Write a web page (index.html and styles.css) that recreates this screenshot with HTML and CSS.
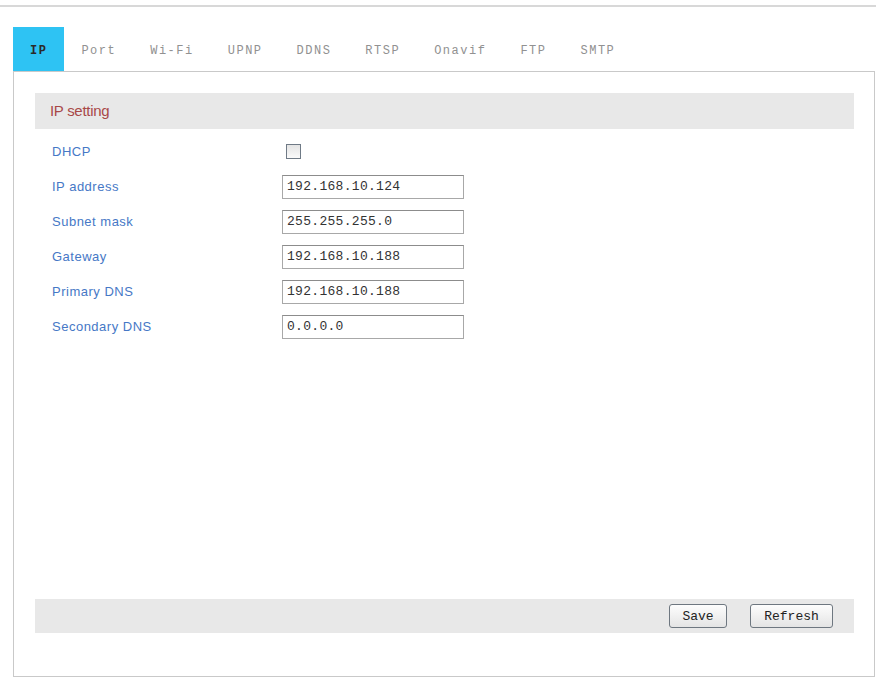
FILE: index.html
```html
<!DOCTYPE html>
<html lang="en">
<head>
    <meta charset="UTF-8">
    <title>IP setting</title>
    <link rel="stylesheet" href="styles.css">
</head>
<body>
    <div class="topline"></div>
    <ul class="tabs">
        <li class="tab active">IP</li>
        <li class="tab">Port</li>
        <li class="tab">Wi-Fi</li>
        <li class="tab">UPNP</li>
        <li class="tab">DDNS</li>
        <li class="tab">RTSP</li>
        <li class="tab">Onavif</li>
        <li class="tab">FTP</li>
        <li class="tab">SMTP</li>
    </ul>
    <div class="panel">
        <div class="section-title">IP setting</div>
        <div class="form">
            <div class="row">
                <label class="label">DHCP</label>
                <input type="checkbox" class="check">
            </div>
            <div class="row">
                <label class="label">IP address</label>
                <input type="text" class="field" value="192.168.10.124">
            </div>
            <div class="row">
                <label class="label">Subnet mask</label>
                <input type="text" class="field" value="255.255.255.0">
            </div>
            <div class="row">
                <label class="label">Gateway</label>
                <input type="text" class="field" value="192.168.10.188">
            </div>
            <div class="row">
                <label class="label">Primary DNS</label>
                <input type="text" class="field" value="192.168.10.188">
            </div>
            <div class="row">
                <label class="label">Secondary DNS</label>
                <input type="text" class="field" value="0.0.0.0">
            </div>
        </div>
        <div class="actions">
            <button class="btn">Save</button>
            <button class="btn">Refresh</button>
        </div>
    </div>
</body>
</html>
```
FILE: styles.css
```css
/* IP setting page */
body {
    margin: 0;
    padding: 0;
    font-family: "Liberation Sans", Arial, sans-serif;
    background: #fff;
}
.topline {
    margin-top: 5px;
    margin-right: 3px;
    border-top: 2px solid #d8d8d8;
}
.tabs {
    list-style: none;
    margin: 20px 0 0 13px;
    padding: 0;
    display: flex;
    height: 44px;
}
.tab {
    padding: 2px 17px 0;
    line-height: 44px;
    height: 42px;
    font-family: "Liberation Mono", monospace;
    font-size: 12px;
    letter-spacing: 1.5px;
    color: #919191;
}
.tab.active {
    background-color: #2ec3f3;
    color: #2a2a2a;
    font-weight: bold;
}
.panel {
    margin: 0 4px 0 13px;
    height: 606px;
    border: 1px solid #c9c9c9;
    padding: 21px 20px 0 21px;
    box-sizing: border-box;
    display: flex;
    flex-direction: column;
}
.section-title {
    height: 36px;
    line-height: 36px;
    background-color: #e8e8e8;
    padding-left: 15px;
    font-size: 15px;
    color: #a84848;
    letter-spacing: -0.3px;
}
.form {
    margin-top: 5px;
    padding-left: 17px;
}
.row {
    display: flex;
    align-items: center;
    height: 35px;
}
.label {
    width: 230px;
    font-size: 13px;
    letter-spacing: 0.5px;
    color: #4678c6;
}
.check {
    margin: 0 0 0 4px;
    width: 15px;
    height: 15px;
    appearance: none;
    border: 1px solid #6f7a86;
    background: linear-gradient(#e4e4e4, #fafafa);
    box-sizing: border-box;
}
.field {
    width: 182px;
    height: 24px;
    box-sizing: border-box;
    margin: 0;
    padding: 0 4px;
    border: 1px solid #a8a8a8;
    border-top-color: #8c8c8c;
    font-family: "Liberation Mono", monospace;
    font-size: 13px;
    letter-spacing: 0.3px;
    color: #333;
}
.actions {
    margin-top: auto;
    margin-bottom: 43px;
    height: 34px;
    background-color: #e8e8e8;
    display: flex;
    justify-content: flex-end;
    align-items: center;
    gap: 23px;
    padding-right: 21px;
}
.btn {
    height: 24px;
    padding: 0 10px;
    border: 1px solid #6e7780;
    border-radius: 3px;
    background: linear-gradient(#fdfdfd, #e4e4e4);
    font-family: "Liberation Mono", monospace;
    font-size: 13px;
    color: #222;
}
.btn:first-child {
    width: 58px;
}
.btn:last-child {
    width: 83px;
}
```
